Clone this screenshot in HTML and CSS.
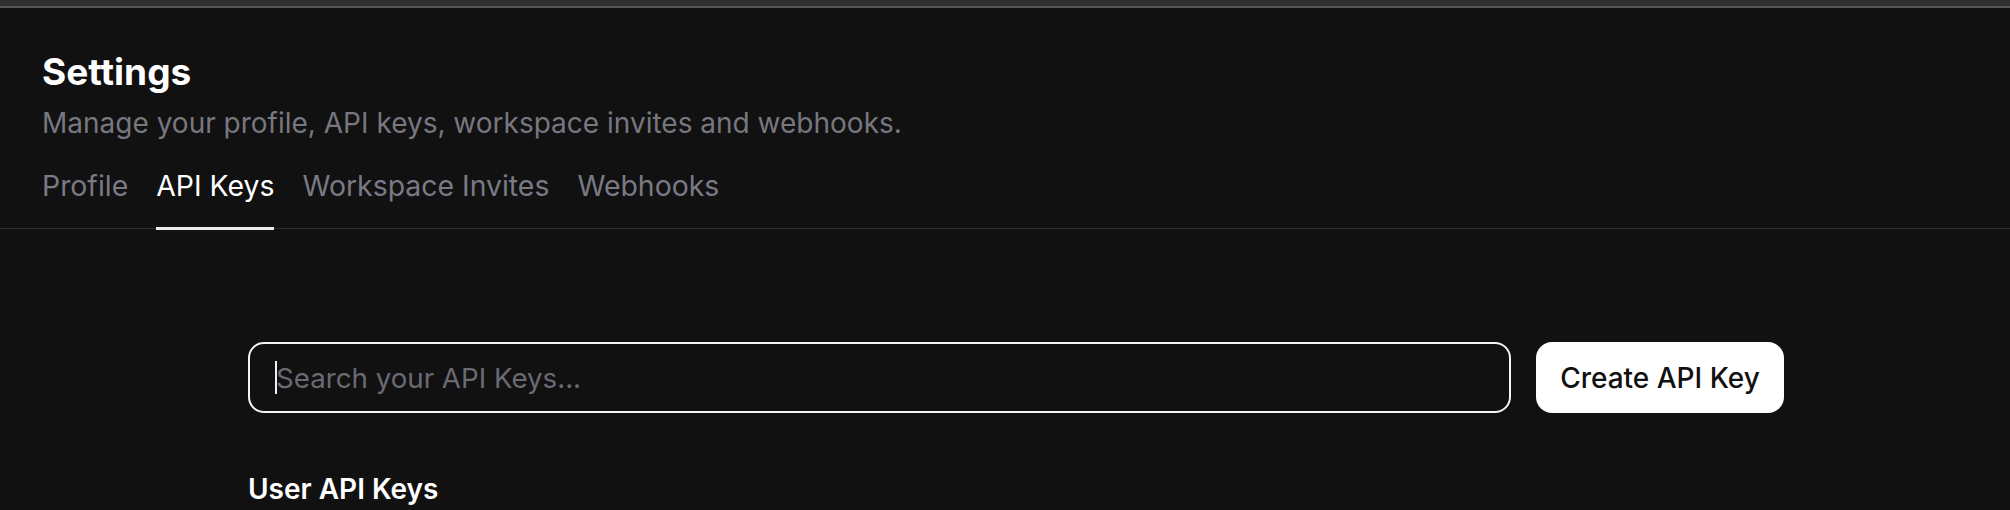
FILE: index.html
```html
<!DOCTYPE html>
<html lang="en">
<head>
<meta charset="utf-8">
<title>Settings</title>
<link rel="stylesheet" href="styles.css">
</head>
<body>
<div class="topbar"></div>
<header class="header">
  <h1 class="title">Settings</h1>
  <p class="subtitle">Manage your profile, API keys, workspace invites and webhooks.</p>
  <nav class="tabs">
    <a class="tab">Profile</a>
    <a class="tab active">API Keys</a>
    <a class="tab">Workspace Invites</a>
    <a class="tab">Webhooks</a>
  </nav>
</header>
<main class="content">
  <div class="toolbar">
    <div class="search">
      <span class="caret"></span>
      <input class="search-input" type="text" placeholder="Search your API Keys...">
    </div>
    <button class="create-btn">Create API Key</button>
  </div>
  <h2 class="section-title">User API Keys</h2>
</main>
</body>
</html>
```
FILE: styles.css
```css
* { box-sizing: border-box; }
html, body { margin: 0; padding: 0; }
body {
  background: #111111;
  font-family: Inter, "Noto Sans", sans-serif;
  color: #ffffff;
  height: 510px;
  overflow: hidden;
}
.topbar {
  height: 8px;
  background: #303030;
  border-bottom: 2px solid #555555;
}
.header {
  padding: 0 0 0 42px;
  border-bottom: 1px solid #2e2e2e;
}
.title {
  margin: 44px 0 0;
  font-size: 37px;
  line-height: 40px;
  font-weight: 700;
}
.subtitle {
  margin: 15px 0 0;
  font-size: 28px;
  line-height: 32px;
  color: #77777f;
}
.tabs {
  display: flex;
  gap: 28px;
  margin-top: 31px;
}
.tab {
  font-size: 28.4px;
  line-height: 32px;
  color: #7a7a84;
  padding: 0 0 25px;
  border-bottom: 3px solid transparent;
  margin-bottom: -2px;
  cursor: pointer;
}
.tab.active {
  color: #ffffff;
  border-bottom-color: #ececec;
}
.content {
  padding: 113px 0 0 248px;
  width: 1784px;
}
.toolbar {
  display: flex;
  gap: 25px;
  align-items: stretch;
}
.search {
  flex: 1;
  height: 71px;
  border: 2px solid #f4f4f4;
  border-radius: 16px;
  display: flex;
  align-items: center;
  padding-left: 25px;
}
.caret {
  width: 1.5px;
  height: 33px;
  background: #f0f0f0;
  flex: none;
}
.search-input {
  flex: 1;
  background: transparent;
  border: none;
  outline: none;
  font-family: inherit;
  font-size: 27.7px;
  color: #ffffff;
  padding: 0;
  margin-left: -0.5px;
}
.search-input::placeholder { color: #6a6a72; }
.create-btn {
  flex: none;
  width: 248px;
  height: 71px;
  background: #ffffff;
  color: #111111;
  border: none;
  border-radius: 16px;
  font-family: inherit;
  font-size: 28px;
  font-weight: 500;
}
.section-title {
  margin: 60px 0 0;
  font-size: 28px;
  line-height: 32px;
  font-weight: 600;
}
```
